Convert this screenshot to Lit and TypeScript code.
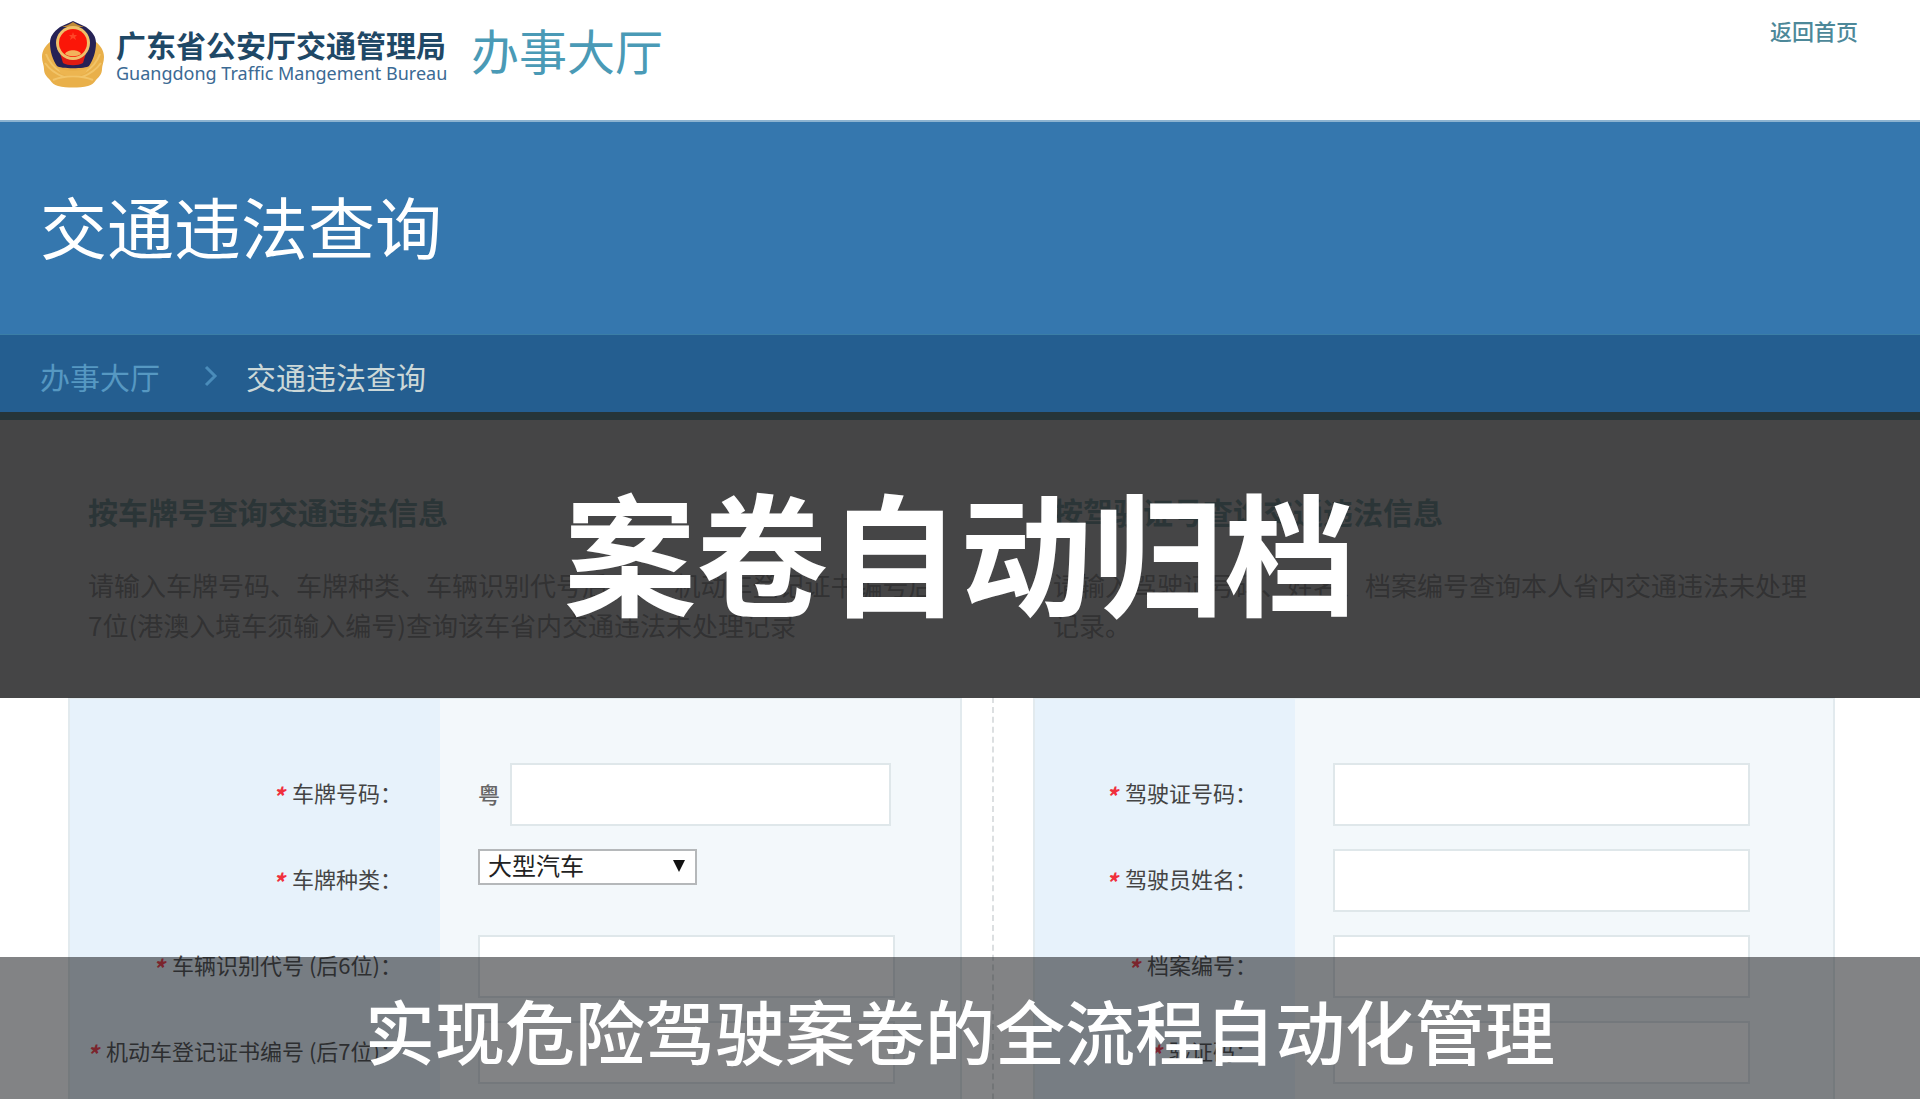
import { LitElement, html, css, svg, nothing } from "lit";
import { customElement, property } from "lit/decorators.js";

interface Field {
  id: string;
  label: string;
  kind?: "text" | "select";
  prefix?: string;
  options?: string[];
}

const PLATE_FIELDS: Field[] = [
  { id: "plate-no", label: "车牌号码", prefix: "粤" },
  { id: "plate-type", label: "车牌种类", kind: "select", options: ["大型汽车", "小型汽车"] },
  { id: "vin", label: "车辆识别代号 (后6位)" },
  { id: "cert-no", label: "机动车登记证书编号 (后7位)" },
];

const LICENCE_FIELDS: Field[] = [
  { id: "licence-no", label: "驾驶证号码" },
  { id: "driver-name", label: "驾驶员姓名" },
  { id: "archive-no", label: "档案编号" },
  { id: "captcha", label: "验证码" },
];

@customElement("police-emblem")
export class PoliceEmblem extends LitElement {
  static styles = css`
    :host { display: block; width: 64px; height: 68px; flex: none; }
    .art { display: block; width: 100%; height: 100%; }
  `;

  render() {
    return html`<svg class="art" viewBox="0 0 64 68" aria-hidden="true">
      ${svg`
        <path d="M9 22C4 26 1 31 1 37c0 5 2 8 2 12 0 5 3 8 6 11 2 3 4 5 8 6 9 2 21 2 30 0 4-1 6-3 8-6 3-3 6-6 6-11 0-4 2-7 2-12 0-6-3-11-8-15z" fill="#e9b04a"/>
        <path d="M5 34c3 8 8 14 15 18M4 43c5 7 11 11 19 14M59 34c-3 8-8 14-15 18M60 43c-5 7-11 11-19 14M12 60c12-5 28-5 40 0" fill="none" stroke="#f2c468" stroke-width="2"/>
        <path d="M32 1c-4 2-9 4-13 6C12 12 9 17 9 23c0 9 3 17 7 23 3 3 29 3 32 0 4-6 7-14 7-23 0-6-3-11-10-16-4-2-9-4-13-6z" fill="#262255"/>
        <path d="M32 2c-3 2-7 4-11 5h22c-4-1-8-3-11-5z" fill="#c08a35"/>
        <path d="M19 33h26l-3 10c-5 3-15 3-20 0z" fill="#e01c12"/>
        <circle cx="32" cy="23" r="17" fill="#efc06a"/>
        <circle cx="32" cy="23" r="14" fill="#fb1608"/>
        <path d="M24 34c2-5 14-5 16 0-4 3-12 3-16 0z" fill="#f3b25c"/>
        <path d="M32 12l1 3h3l-2 2 1 3-3-2-3 2 1-3-2-2h3z" fill="#ff4526"/>
        <path d="M17 48c9 4 21 4 30 0l-3 6c-8 2-16 2-24 0z" fill="#edb550"/>
      `}
    </svg>`;
  }
}

@customElement("query-panel")
export class QueryPanel extends LitElement {
  @property() heading = "";
  @property({ attribute: false }) lines: string[] = [];
  @property({ attribute: false }) fields: Field[] = [];

  static styles = css`
    :host { display: flex; flex-direction: column; min-width: 0; --label: 370px; }
    :host([narrow]) { --label: 260px; }
    .intro { box-sizing: border-box; height: 277px; padding: 72px 0 0 20px; }
    .heading { margin: 0; font-size: 30px; line-height: 38px; font-weight: 700; color: #3a858c; }
    .text { margin: 35px 0 0; font-size: 26px; line-height: 40px; color: #6c6c6c; white-space: nowrap; }
    .form {
      flex: 1;
      display: flex;
      flex-direction: column;
      gap: 24px;
      padding: 64px 0;
      border: 2px solid #e2eaee;
      background: linear-gradient(to right, #e7f2fb var(--label), #f3f8fb var(--label));
    }
    .row { display: grid; grid-template-columns: var(--label) minmax(0, 1fr); height: 62px; }
    .label {
      display: flex;
      align-items: center;
      justify-content: flex-end;
      gap: 8px;
      height: 58px;
      padding-right: 38px;
      font-size: 22px;
      color: #444;
      white-space: nowrap;
    }
    .star { color: #f0303c; font-style: italic; font-weight: 700; font-size: 24px; line-height: 22px; padding-top: 8px; }
    .field { display: flex; align-items: flex-start; gap: 10px; padding: 0 64px 0 38px; }
    .prefix { font-size: 22px; line-height: 60px; font-weight: 500; color: #666; }
    .input {
      box-sizing: border-box;
      width: 100%;
      max-width: 417px;
      height: 63px;
      padding: 0 12px;
      border: 2px solid #dfe7ea;
      border-radius: 0;
      background: #fff;
      font: inherit;
      font-size: 24px;
      color: #333;
    }
    .prefix + .input { max-width: 381px; }
    .pick { position: relative; width: 219px; height: 36px; }
    .select {
      box-sizing: border-box;
      width: 100%;
      height: 100%;
      padding: 0 32px 4px 8px;
      border: 2px solid #b5b8ba;
      border-radius: 0;
      background: #fff;
      appearance: none;
      font: inherit;
      font-size: 24px;
      line-height: 28px;
      color: #222;
    }
    .arrow { position: absolute; right: 12px; top: 11px; width: 12px; height: 12px; pointer-events: none; }
  `;

  private control(f: Field) {
    if (f.kind === "select") {
      return html`<div class="pick">
        <select class="select" id=${f.id}>
          ${f.options?.map((o) => html`<option>${o}</option>`)}
        </select>
        <svg class="arrow" viewBox="0 0 12 12" aria-hidden="true"><path d="M0 0h12L6 12z" fill="#111" /></svg>
      </div>`;
    }
    return html`${f.prefix ? html`<span class="prefix">${f.prefix}</span>` : nothing}<input class="input" id=${f.id} type="text" />`;
  }

  render() {
    return html`
      <div class="intro">
        <h2 class="heading">${this.heading}</h2>
        <p class="text">${this.lines.map((l, i) => html`${i ? html`<br />` : nothing}${l}`)}</p>
      </div>
      <form class="form">
        ${this.fields.map(
          (f) => html`<div class="row">
            <label class="label" for=${f.id}><span class="star">*</span><span>${f.label}：</span></label>
            <div class="field">${this.control(f)}</div>
          </div>`
        )}
      </form>
    `;
  }
}

@customElement("app-root")
export class AppRoot extends LitElement {
  static styles = css`
    :host {
      position: relative;
      display: flex;
      flex-direction: column;
      height: 100vh;
      overflow: hidden;
      background: #fff;
      font-family: "Noto Sans CJK SC", sans-serif;
    }
    .top { display: flex; align-items: flex-start; height: 120px; flex: none; box-sizing: border-box; padding: 20px 62px 0 41px; }
    .brand { display: flex; flex-direction: column; width: 330px; margin-left: 11px; padding-top: 7px; white-space: nowrap; }
    .bureau { font-size: 30px; line-height: 34px; font-weight: 700; color: #1f4866; }
    .english { font-family: "Noto Sans", sans-serif; font-size: 18px; line-height: 24px; color: #3b6a94; }
    .hall { margin-left: 25px; font-size: 48px; line-height: 58px; font-weight: 400; color: #4a9ab6; }
    .home { margin-left: auto; font-size: 22px; line-height: 20px; font-weight: 500; color: #4d8899; text-decoration: none; }
    .banner { display: flex; align-items: center; height: 214px; flex: none; padding: 0 40px 6px; background: #3577ae; border-top: 2px solid #8db3d0; box-sizing: border-box; }
    .title { margin: 0; font-size: 67px; line-height: 80px; font-weight: 400; color: #fff; }
    .crumbs { display: flex; align-items: center; height: 86px; flex: none; box-sizing: border-box; padding: 4px 40px 0; background: #245e90; border-top: 1px solid #3b7ea6; border-bottom: 8px solid #108090; font-size: 30px; line-height: 40px; }
    .crumb { color: #5698c2; text-decoration: none; }
    .chevron { width: 14px; height: 22px; margin: 0 28px 0 44px; }
    .current { color: #ccd8d8; }
    .content { flex: 1; display: grid; grid-template-columns: minmax(0, 894fr) 71px minmax(0, 802fr); padding: 0 85px 0 68px; }
    .divider { margin: 277px 0 0 30px; border-left: 2px dashed #dcdfe1; }
    .veil { position: absolute; left: 0; right: 0; display: flex; align-items: center; justify-content: center; box-sizing: border-box; color: #fff; white-space: nowrap; }
    .headline { top: 412px; height: 286px; padding-bottom: 12px; background: rgba(41, 41, 43, 0.87); font-size: 132px; line-height: 160px; font-weight: 700; }
    .caption { bottom: 0; height: 142px; padding-top: 4px; background: rgba(28, 30, 32, 0.55); font-size: 70px; line-height: 90px; font-weight: 500; }
  `;

  render() {
    return html`
      <header class="top">
        <police-emblem></police-emblem>
        <div class="brand">
          <span class="bureau">广东省公安厅交通管理局</span>
          <span class="english">Guangdong Traffic Mangement Bureau</span>
        </div>
        <span class="hall">办事大厅</span>
        <a class="home" href="#">返回首页</a>
      </header>
      <section class="banner"><h1 class="title">交通违法查询</h1></section>
      <nav class="crumbs">
        <a class="crumb" href="#">办事大厅</a>
        <svg class="chevron" viewBox="0 0 14 22" aria-hidden="true">
          <path d="M2 2l9 9-9 9" fill="none" stroke="#4a8cba" stroke-width="3" />
        </svg>
        <span class="current">交通违法查询</span>
      </nav>
      <main class="content">
        <query-panel
          .heading=${"按车牌号查询交通违法信息"}
          .lines=${["请输入车牌号码、车牌种类、车辆识别代号后6位、机动车登记证书编号后", "7位(港澳入境车须输入编号)查询该车省内交通违法未处理记录"]}
          .fields=${PLATE_FIELDS}
        ></query-panel>
        <span class="divider"></span>
        <query-panel
          narrow
          .heading=${"按驾驶证号查询交通违法信息"}
          .lines=${["请输入驾驶证号码、姓名、档案编号查询本人省内交通违法未处理", "记录。"]}
          .fields=${LICENCE_FIELDS}
        ></query-panel>
      </main>
      <div class="veil headline">案卷自动归档</div>
      <div class="veil caption">实现危险驾驶案卷的全流程自动化管理</div>
    `;
  }
}
